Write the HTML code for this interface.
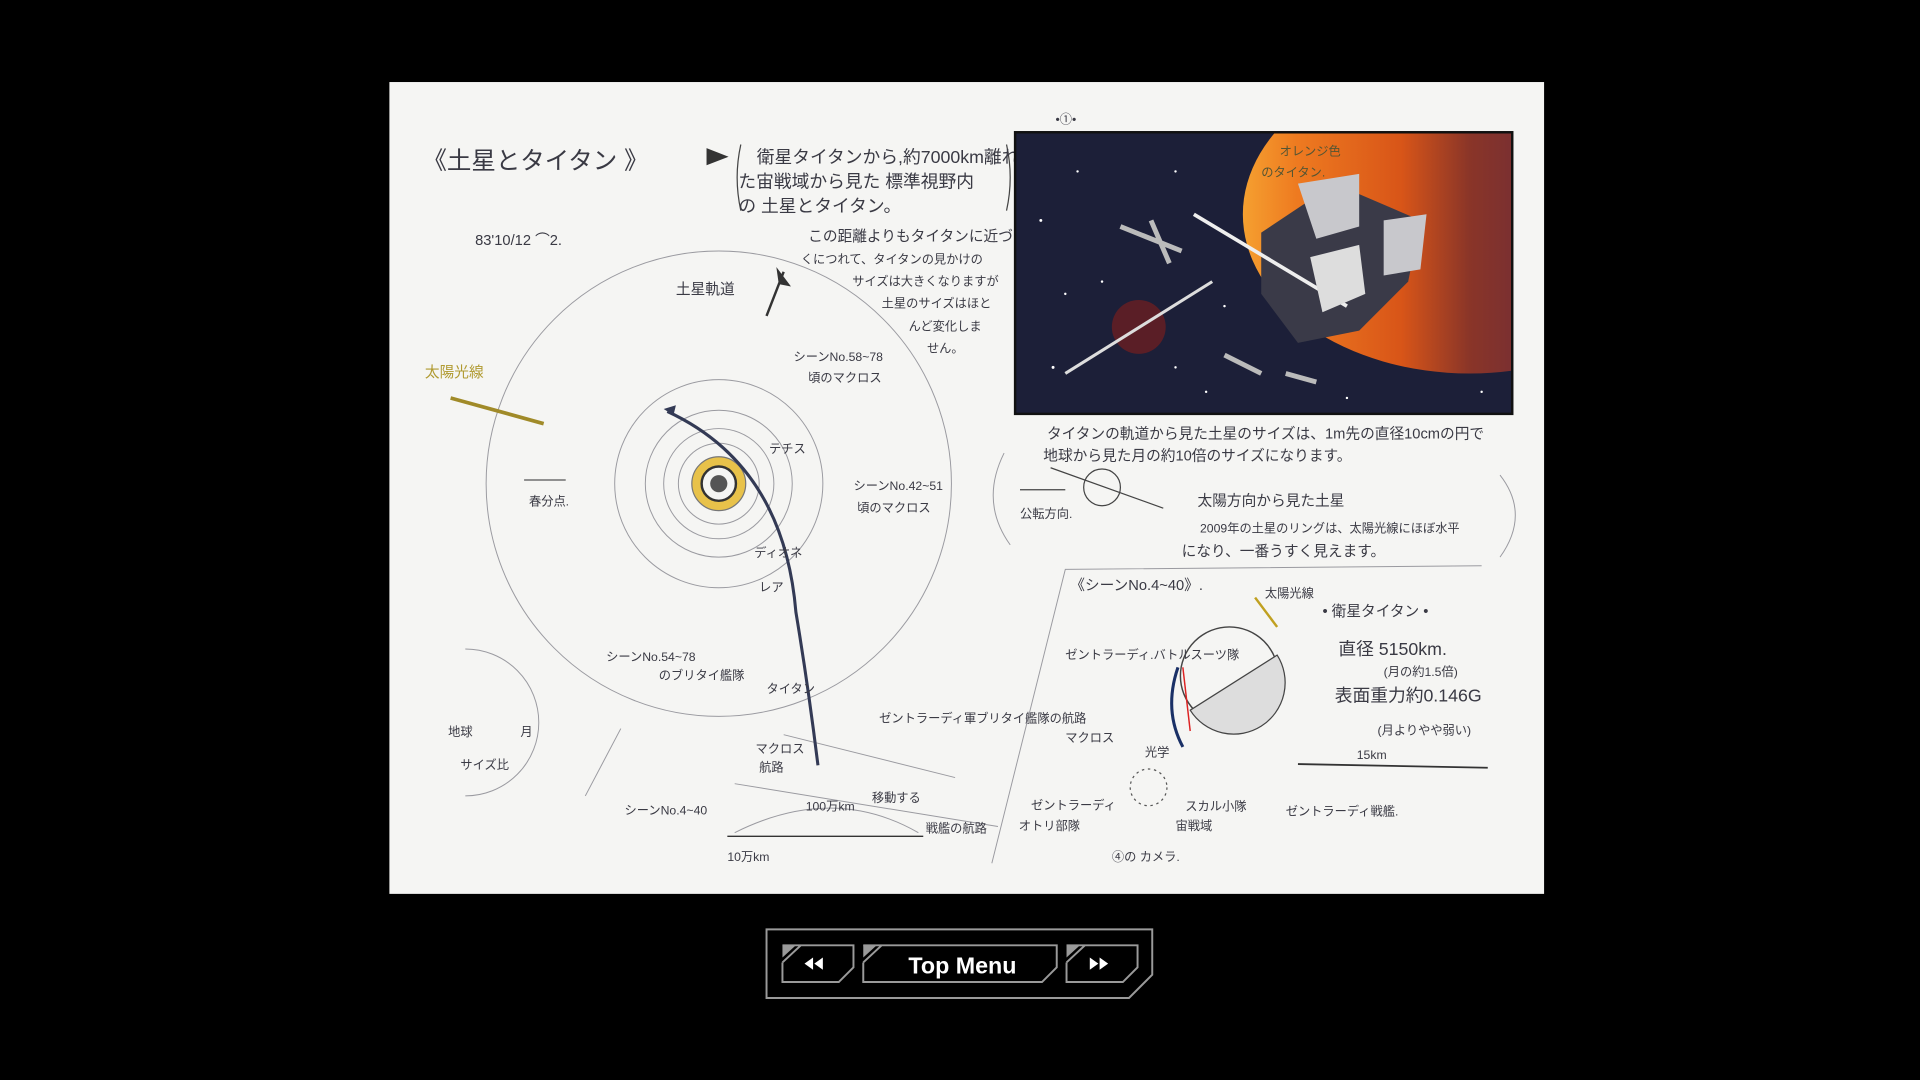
<!DOCTYPE html>
<html><head><meta charset="utf-8"><style>
html,body{margin:0;padding:0;background:#000;width:1920px;height:1080px;overflow:hidden}
svg{display:block}
text{font-family:"Liberation Sans","Noto Sans CJK JP",sans-serif;fill:#3a3a44}
.s{font-size:10px}.m{font-size:12px}.l{font-size:14.5px}
</style></head><body>
<svg width="1920" height="1080" viewBox="0 0 1568 882" xmlns="http://www.w3.org/2000/svg">
<defs>
<linearGradient id="pl" x1="0" y1="0" x2="1" y2="0"><stop offset="0" stop-color="#f5a030"/><stop offset="0.12" stop-color="#ee7a20"/><stop offset="0.35" stop-color="#d85518"/><stop offset="0.5" stop-color="#8a3528"/><stop offset="0.7" stop-color="#6a2a3a"/><stop offset="1" stop-color="#5a2535"/></linearGradient>
</defs>
<rect width="1568" height="882" fill="#000"/>
<rect x="318" y="67" width="943" height="663" fill="#f5f5f3"/>
<g fill="none" stroke="#9a9aa0" stroke-width="0.8">
<circle cx="587" cy="395" r="190"/>
<circle cx="587" cy="395" r="85"/>
<circle cx="587" cy="395" r="60"/>
<circle cx="587" cy="395" r="45"/>
<circle cx="587" cy="395" r="33"/>
<path d="M380 530 A60 60 0 0 1 380 650 M380 530 A60 60 0 1 1 380 650"/>
<line x1="478" y1="650" x2="507" y2="595"/>
<line x1="594" y1="683" x2="754" y2="683" stroke="#333" stroke-width="1.2"/>
<path d="M600 680 Q 680 640 750 680"/>
<path d="M810 705 L870 465 L1210 462"/>
<path d="M820 370 Q800 410 825 445"/>
<path d="M1225 388 Q1250 420 1225 455"/>
<line x1="600" y1="640" x2="815" y2="675"/>
<line x1="640" y1="600" x2="780" y2="635"/>
</g>
<circle cx="587" cy="395" r="22" fill="#e8c24a" stroke="#777" stroke-width="1"/>
<circle cx="587" cy="395" r="14" fill="#f5f5f3" stroke="#333" stroke-width="2"/>
<circle cx="587" cy="395" r="7" fill="#555"/>
<path d="M545 336 Q 640 380 650 500 Q 660 560 668 625" fill="none" stroke="#333a55" stroke-width="2.5"/>
<path d="M542 334 l10 -3 l-2 8z" fill="#333a55"/>
<line x1="368" y1="325" x2="444" y2="346" stroke="#a08a28" stroke-width="3"/>
<line x1="626" y1="258" x2="640" y2="222" stroke="#333" stroke-width="2"/>
<path d="M634 218 l12 16 l-10 -2z" fill="#333"/>
<line x1="428" y1="392" x2="462" y2="392" stroke="#555" stroke-width="1"/>
<text x="345" y="138" style="font-size:20px">《土星とタイタン 》</text>
<path d="M577 121 l18 7 l-18 7z" fill="#333"/>
<path d="M605 118 Q599 145 605 172 M822 118 Q828 145 822 172" fill="none" stroke="#444"/>
<text x="618" y="133" class="l">衛星タイタンから,約7000km離れ</text>
<text x="603" y="153" class="l">た宙戦域から見た 標準視野内</text>
<text x="603" y="173" class="l">の 土星とタイタン。</text>
<text x="388" y="200" class="m">83'10/12 ⌒2.</text>
<text x="660" y="197" class="m">この距離よりもタイタンに近づ</text>
<text x="654" y="215" class="s">くにつれて、タイタンの見かけの</text>
<text x="696" y="233" class="s">サイズは大きくなりますが</text>
<text x="720" y="251" class="s">土星のサイズはほと</text>
<text x="742" y="270" class="s">んど変化しま</text>
<text x="757" y="288" class="s">せん。</text>
<text x="552" y="240" class="m">土星軌道</text>
<text x="347" y="308" class="m" style="fill:#b09a30">太陽光線</text>
<text x="648" y="295" class="s">シーンNo.58~78</text>
<text x="660" y="312" class="s">頃のマクロス</text>
<text x="628" y="370" class="s">テチス</text>
<text x="697" y="400" class="s">シーンNo.42~51</text>
<text x="700" y="418" class="s">頃のマクロス</text>
<text x="432" y="413" class="s">春分点.</text>
<text x="616" y="455" class="s">ディオネ</text>
<text x="620" y="483" class="s">レア</text>
<text x="495" y="540" class="s">シーンNo.54~78</text>
<text x="538" y="555" class="s">のブリタイ艦隊</text>
<text x="626" y="566" class="s">タイタン</text>
<text x="718" y="590" class="s">ゼントラーディ軍ブリタイ艦隊の航路</text>
<text x="617" y="615" class="s">マクロス</text>
<text x="620" y="630" class="s">航路</text>
<text x="510" y="665" class="s">シーンNo.4~40</text>
<text x="658" y="662" class="s">100万km</text>
<text x="712" y="655" class="s">移動する</text>
<text x="756" y="680" class="s">戦艦の航路</text>
<text x="594" y="703" class="s">10万km</text>
<text x="366" y="601" class="s">地球</text><text x="425" y="601" class="s">月</text>
<text x="376" y="628" class="s">サイズ比</text>
<text x="862" y="101" class="s">•①•</text>
<rect x="829" y="108" width="406" height="230" fill="#1c1f38" stroke="#111" stroke-width="2"/>
<clipPath id="c"><rect x="830" y="109" width="404" height="228"/></clipPath>
<g clip-path="url(#c)">
<ellipse cx="1200" cy="175" rx="185" ry="130" fill="url(#pl)"/>
<circle cx="930" cy="267" r="22" fill="#5a1e26"/>
<line x1="870" y1="305" x2="990" y2="230" stroke="#ddd" stroke-width="2.5"/>
<path d="M1030 190 L1090 150 L1160 180 L1150 230 L1110 270 L1060 280 L1030 240 Z" fill="#3a3a48"/>
<path d="M1060 150 L1110 142 L1110 185 L1075 195 Z M1130 180 L1165 175 L1160 220 L1130 225 Z" fill="#c8c8cc"/>
<path d="M975 175 L1100 250" stroke="#eee" stroke-width="3"/>
<path d="M1070 210 L1110 200 L1115 240 L1080 255 Z" fill="#ddd"/>
<path d="M915 185 L965 205 M940 180 L955 215" stroke="#bbb" stroke-width="4"/>
<path d="M1000 290 L1030 305 M1050 305 L1075 312" stroke="#bbb" stroke-width="4"/>
<g fill="#fff"><circle cx="850" cy="180" r="1.2"/><circle cx="880" cy="140" r="1"/><circle cx="900" cy="230" r="1"/><circle cx="860" cy="300" r="1.2"/><circle cx="960" cy="300" r="1"/><circle cx="1000" cy="250" r="1"/><circle cx="960" cy="140" r="1"/><circle cx="1210" cy="320" r="1"/><circle cx="1100" cy="325" r="1"/><circle cx="870" cy="240" r="1"/><circle cx="985" cy="320" r="1"/></g>
</g>
<text x="1045" y="127" class="s" style="fill:#553">オレンジ色</text>
<text x="1030" y="144" class="s" style="fill:#553">のタイタン.</text>
<text x="855" y="358" class="m">タイタンの軌道から見た土星のサイズは、1m先の直径10cmの円で</text>
<text x="852" y="376" class="m">地球から見た月の約10倍のサイズになります。</text>
<line x1="858" y1="382" x2="950" y2="415" stroke="#444" stroke-width="1"/>
<circle cx="900" cy="398" r="15" fill="none" stroke="#444" stroke-width="1"/>
<line x1="833" y1="400" x2="870" y2="400" stroke="#444"/>
<text x="833" y="423" class="s">公転方向.</text>
<text x="978" y="413" class="m">太陽方向から見た土星</text>
<text x="980" y="435" class="s">2009年の土星のリングは、太陽光線にほぼ水平</text>
<text x="965" y="454" class="m">になり、一番うすく見えます。</text>
<text x="874" y="482" class="m">《シーンNo.4~40》.</text>
<text x="1033" y="488" class="s">太陽光線</text>
<line x1="1025" y1="488" x2="1043" y2="512" stroke="#c0a020" stroke-width="2"/>
<text x="1080" y="503" class="m">• 衛星タイタン •</text>
<text x="1093" y="535" class="l">直径 5150km.</text>
<text x="1130" y="552" class="s">(月の約1.5倍)</text>
<text x="1090" y="573" class="l">表面重力約0.146G</text>
<text x="1125" y="600" class="s">(月よりやや弱い)</text>
<text x="1108" y="620" class="s">15km</text>
<line x1="1060" y1="624" x2="1215" y2="627" stroke="#333" stroke-width="1.5"/>
<circle cx="1004" cy="552" r="40" fill="#f5f5f3" stroke="#444" stroke-width="1.2"/>
<path d="M972 580 L1043 535 A40 40 0 0 1 972 580 Z" fill="#ddd" stroke="#444"/>
<path d="M962 545 Q950 580 966 610" stroke="#1a3066" stroke-width="2.5" fill="none"/>
<line x1="966" y1="545" x2="972" y2="597" stroke="#d22" stroke-width="1.2"/>
<circle cx="938" cy="643" r="15" fill="none" stroke="#555" stroke-dasharray="2 3"/>
<text x="870" y="538" class="s">ゼントラーディ.バトルスーツ隊</text>
<text x="870" y="606" class="s">マクロス</text>
<text x="935" y="618" class="s">光学</text>
<text x="842" y="661" class="s">ゼントラーディ</text>
<text x="832" y="678" class="s">オトリ部隊</text>
<text x="968" y="662" class="s">スカル小隊</text>
<text x="960" y="678" class="s">宙戦域</text>
<text x="1050" y="666" class="s">ゼントラーディ戦艦.</text>
<text x="908" y="703" class="s">④の カメラ.</text>
<g fill="none" stroke="#9a9a9a" stroke-width="1.6">
<path d="M626 759 L941 759 L941 796 L922 815 L626 815 Z"/>
<path d="M639 772 L654 772 L639 786 M654 772 L697 772 L697 790 L685 802 L639 802 L639 786"/>
<path d="M705 772 L720 772 L705 786 M720 772 L863 772 L863 790 L851 802 L705 802 L705 786"/>
<path d="M871 772 L886 772 L871 786 M886 772 L929 772 L929 790 L917 802 L871 802 L871 786"/>
</g>
<path d="M639 772 L650 772 L639 782Z M705 772 L716 772 L705 782Z M871 772 L882 772 L871 782Z" fill="#9a9a9a"/>
<path d="M657 787 L664 782 L664 792Z M665 787 L672 782 L672 792Z" fill="#fff"/>
<path d="M905 787 L898 782 L898 792Z M897 787 L890 782 L890 792Z" fill="#fff"/>
<text x="786" y="795" text-anchor="middle" style="font-size:19px;font-weight:bold;fill:#fff">Top Menu</text>
</svg>
</body></html>
